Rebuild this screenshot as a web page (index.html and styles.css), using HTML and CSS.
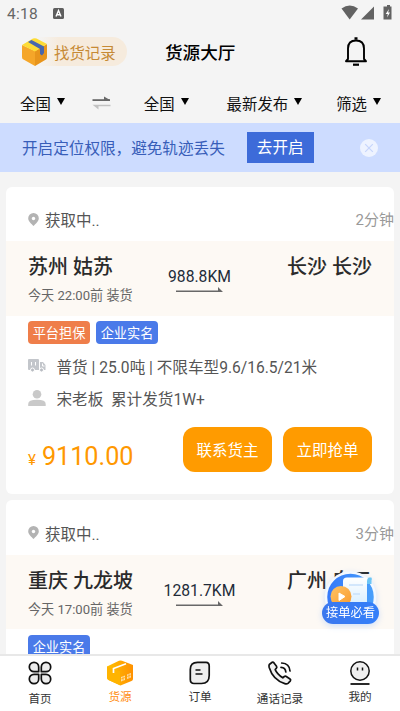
FILE: index.html
```html
<!DOCTYPE html>
<html lang="zh-CN">
<head>
<meta charset="utf-8">
<title>货源大厅</title>
<link rel="stylesheet" href="styles.css">
</head>
<body>
<div class="app">
  <div class="status">
    <span class="clock">4:18</span>
    <svg class="status-a" width="11" height="11" viewBox="0 0 11 11"><rect width="11" height="11" rx="1.500" fill="#5e5e5e"/><path d="M3 8.500L5.500 2.500L8 8.500M3.900 6.700H7.100" fill="none" stroke="#fff" stroke-width="1.400"/></svg>
    <svg class="status-icons" width="52" height="16" viewBox="0 0 52 16" fill="#626262"><path d="M.5 3.500Q8.700-2.500 17 3.500L8.700 14.500Z"/><path d="M33 1.500V14.500H20Z"/><path d="M44.500 1.500H46V0H49V1.500H50.500V14.500H42.500V1.500Z"/><path d="M48 4L44.700 9H46.800L46 12.500L49 7.500H47.100Z" fill="#fff"/></svg>
  </div>
  <header class="header">
    <div class="record">
      <svg class="box" width="26" height="28" viewBox="0 0 26 28"><path d="M0 7L13 13V28L1.500 21.500Q0 21 0 19Z" fill="#f5a629"/><path d="M25 6L13 13V28L24 21.500Q25 21 25 19Z" fill="#e8951c"/><path d="M0 7L11 .6Q13-.2 14.500.6L25 6L13 13.500Z" fill="#fddc36"/><path d="M6 4L9.500 2L22 8.500V15L20 17.500L18 16V11Z" fill="#4867ad"/></svg>
      <span>找货记录</span>
    </div>
    <h1>货源大厅</h1>
    <svg class="bell" width="24" height="30" viewBox="0 0 24 30" fill="none" stroke="#000"><path d="M4 22V11.500Q4 3.500 12 3.500T20 11.500V22L22 24.200H2Z" stroke-width="1.900" stroke-linejoin="round"/><path d="M10.500 1.500H13.500" stroke-width="2.500"/><path d="M9 27.700H15" stroke-width="2.200"/></svg>
  </header>
  <div class="filters">
    <div class="filter from">全国<i></i></div>
    <svg class="swap" width="19" height="14" viewBox="0 0 19 14"><path d="M.5 4H18L12 .5V4Z" fill="#686868"/><path d="M.5 3.200H18V5H.5Z" fill="#686868"/><path d="M.5 8.700H18.500V10.300H6.500V13.500Z" fill="#c2c2c2"/></svg>
    <div class="filter to">全国<i></i></div>
    <div class="filter sort">最新发布<i></i></div>
    <div class="filter pick">筛选<i></i></div>
  </div>
  <div class="notice">
    <span class="notice-text">开启定位权限，避免轨迹丢失</span>
    <span class="enable">去开启</span>
    <svg class="close" width="18" height="18" viewBox="0 0 18 18"><circle cx="9" cy="9" r="9" fill="#eef3ff"/><path d="M5.200 5.200L12.800 12.800M12.800 5.200L5.200 12.800" stroke="#c6d5fb" stroke-width="1.200"/></svg>
  </div>
  <main class="list">
    <article class="card">
      <div class="card-head">
        <svg class="pin" width="11" height="13" viewBox="0 0 11 13"><path d="M5.500 0A5.300 5.300 0 0 1 10.800 5.300C10.800 8.500 7.500 11 5.500 13C3.500 11 .2 8.500.2 5.300A5.300 5.300 0 0 1 5.500 0Z" fill="#b3b3b3"/><circle cx="5.500" cy="5.500" r="1.700" fill="#fff"/></svg>
        <span>获取中..</span><span class="ago">2分钟</span>
      </div>
      <div class="route">
        <div class="start"><strong>苏州 姑苏</strong><small>今天 22:00前 装货</small></div>
        <div class="distance"><span>988.8KM</span><svg width="47" height="6" viewBox="0 0 47 6"><path d="M0 3.500H42V0L47 5H0Z" fill="#686868"/></svg></div>
        <strong class="end">长沙 长沙</strong>
      </div>
      <div class="tags"><span class="tag orange">平台担保</span><span class="tag">企业实名</span></div>
      <div class="info cargo">
        <svg width="18" height="14" viewBox="0 0 18 14"><path d="M1 0H10Q11 0 11 1V11H1Q0 11 0 10V1Q0 0 1 0ZM12 3H15L17.500 6V11H12Z" fill="#c3c6cb"/><path d="M3.500 3V6.500M7.500 3V6.500M14.500 4.500V7H16.500" fill="none" stroke="#fff" stroke-width="1"/><circle cx="4.500" cy="11" r="2" fill="#b9bdc3" stroke="#fff"/><circle cx="13.500" cy="11" r="2" fill="#b9bdc3" stroke="#fff"/></svg>
        <span>普货 | 25.0吨 | 不限车型9.6/16.5/21米</span>
      </div>
      <div class="info owner">
        <svg width="18" height="16" viewBox="0 0 18 16" fill="#c9c9c9"><circle cx="9" cy="4.300" r="4.300"/><path d="M.2 16V14Q.2 9.800 9 9.800T17.700 14V16Z"/></svg>
        <span>宋老板&nbsp; 累计发货1W+</span>
      </div>
      <div class="actions">
        <div class="price"><small>¥</small>9110.00</div>
        <span class="button">联系货主</span><span class="button">立即抢单</span>
      </div>
    </article>
    <article class="card">
      <div class="card-head">
        <svg class="pin" width="11" height="13" viewBox="0 0 11 13"><path d="M5.500 0A5.300 5.300 0 0 1 10.800 5.300C10.800 8.500 7.500 11 5.500 13C3.500 11 .2 8.500.2 5.300A5.300 5.300 0 0 1 5.500 0Z" fill="#b3b3b3"/><circle cx="5.500" cy="5.500" r="1.700" fill="#fff"/></svg>
        <span>获取中..</span><span class="ago">3分钟</span>
      </div>
      <div class="route">
        <div class="start"><strong>重庆 九龙坡</strong><small>今天 17:00前 装货</small></div>
        <div class="distance"><span>1281.7KM</span><svg width="47" height="6" viewBox="0 0 47 6"><path d="M0 3.500H42V0L47 5H0Z" fill="#686868"/></svg></div>
        <strong class="end">广州 白云</strong>
      </div>
      <div class="tags"><span class="tag">企业实名</span></div>
    </article>
  </main>
  <div class="guide">
    <svg width="52" height="38" viewBox="0 0 52 38">
      <defs>
        <linearGradient id="disc" x1="0" y1="0" x2="1" y2="0"><stop offset="0" stop-color="#3478fa"/><stop offset="1" stop-color="#49a0fb"/></linearGradient>
        <linearGradient id="paper" x1="0" y1="0" x2="0" y2="1"><stop offset="0" stop-color="#fff"/><stop offset="1" stop-color="#d9efff"/></linearGradient>
        <linearGradient id="play" x1="0" y1="0" x2="1" y2="1"><stop offset="0" stop-color="#ffc466"/><stop offset="1" stop-color="#f99a2d"/></linearGradient>
      </defs>
      <circle cx="25.500" cy="26" r="24.500" fill="url(#disc)" stroke="#f3f8ff" stroke-width="2.500"/>
      <path d="M41 9Q41 6.500 43 6.500H46.500V13H41Z" fill="#6cc5f5"/>
      <path d="M18 10Q18 6.500 22 6.500H44Q42 7 42 10V33H18Z" fill="url(#paper)"/>
      <path d="M24 14H38M28 23H35" stroke="#c8e1fb" stroke-width="1.500"/>
      <circle cx="16" cy="25.500" r="10.500" fill="url(#play)"/><path d="M14 22L20 25.500L14 29.500Z" fill="#fff" stroke="#fff" stroke-linejoin="round"/>
    </svg>
    <span>接单必看</span>
  </div>
  <nav class="nav">
    <div class="nav-item low">
      <svg width="24" height="24" viewBox="0 0 24 24" fill="#ededed" stroke="#111" stroke-width="1.700"><path d="M10.700 10.700H6A4.700 4.700 0 1 1 10.700 6ZM13.300 10.700V6A4.700 4.700 0 1 1 18 10.700ZM10.700 13.300V18A4.700 4.700 0 1 1 6 13.300ZM13.300 13.300H18A4.700 4.700 0 1 1 13.300 18Z" stroke-linejoin="round"/></svg>
      <span>首页</span>
    </div>
    <div class="nav-item active">
      <svg width="28" height="26" viewBox="0 0 28 26"><defs><linearGradient id="parcel"><stop offset="0" stop-color="#ffc000"/><stop offset="1" stop-color="#ff9100"/></linearGradient></defs><path d="M1 6.500L13 .8Q14.500.2 16 .8L27 5V19Q27 20.500 25.500 21L14.500 25.500L2.500 20Q1 19.300 1 17.500Z" fill="url(#parcel)"/><path d="M1 6.500L14 11V25.300L2.500 20Q1 19.300 1 17.500Z" fill="#ffb400"/><path d="M7.500 13V8.500L20 3.800" fill="none" stroke="#fff" stroke-width="1.700"/><path d="M15 17L19 15.500V20L15 21.500ZM21 14.500L25 13V17.500L21 19Z" fill="#fff" opacity=".65"/><path d="M15 19L19 17.500M21 16.500L25 15M17 16.500V20.500M23 14V18" stroke="#ffa000" stroke-width=".7"/></svg>
      <span>货源</span>
    </div>
    <div class="nav-item order">
      <svg width="24" height="24" viewBox="0 0 24 24"><path d="M9.500 1.300H18Q21.200 1.300 21.200 5V14.500Q21.200 22.500 13.500 22.500H6Q2.300 22.500 2.300 18.500V8.500Q2.300 1.300 9.500 1.300Z" fill="#eee" stroke="#111" stroke-width="1.700"/><path d="M7.500 9H12.500M7.500 13H14.500" stroke="#111" stroke-width="1.600"/></svg>
      <span>订单</span>
    </div>
    <div class="nav-item low">
      <svg width="24" height="24" viewBox="0 0 24 24" fill="none" stroke="#111" stroke-width="1.700" stroke-linecap="round" stroke-linejoin="round"><path d="M1.300 3.500L4.200 1.300Q5.100.8 6 1.900L8.500 5.200Q9.200 6.400 8.300 7.300L7.200 8.600Q9 13 14.800 16.800L16.300 15.500Q17.300 14.800 18.300 15.500L22 18Q23.100 18.900 22.400 19.800L20 22.300Q18.800 23.300 16.800 22.600Q5 19 1.200 6.500Q.7 4.700 1.300 3.500Z" fill="#f2f2f2"/><path d="M13 6.300Q17.500 6.500 17.800 11M13.700 2Q21.500 2.400 22 10"/></svg>
      <span>通话记录</span>
    </div>
    <div class="nav-item mine">
      <svg width="24" height="24" viewBox="0 0 24 24"><circle cx="12" cy="10" r="9.200" fill="#eee" stroke="#111" stroke-width="1.500"/><path d="M9.500 6.500V9.500M14.500 6.500V9.500" stroke="#111" stroke-width="1.500"/><path d="M2.500 23H21.500" stroke="#111" stroke-width="1.800"/></svg>
      <span>我的</span>
    </div>
  </nav>
</div>
</body>
</html>
```
FILE: styles.css
```css
* { box-sizing: border-box; }
body {
  margin: 0;
  font-family: Roboto, "Noto Sans CJK SC", sans-serif;
  color: #222;
}
svg { display: block; flex: none; overflow: visible; }
.app {
  position: relative;
  display: flex;
  flex-direction: column;
  width: 400px;
  height: 711px;
  overflow: hidden;
  background: #f4f4f4;
  white-space: nowrap;
}
.status {
  display: flex;
  align-items: center;
  height: 28px;
  padding: 0 7px;
  color: #666;
}
.clock { width: 46px; font-size: 15.500px; letter-spacing: .3px; }
.status-a { margin-top: -1px; }
.status-icons { margin: -2px 0 0 auto; }
.header {
  display: grid;
  grid-template-columns: 105px 1fr 24px;
  align-items: center;
  height: 48px;
  padding: 0 32px 0 22px;
}
.record {
  display: flex;
  align-items: center;
  gap: 6px;
  height: 29px;
  margin-top: -1px;
  border-radius: 5px 15px 15px 5px;
  background: linear-gradient(90deg, transparent 15%, #f6ebdd 35%);
  color: #c68a35;
  font-size: 15.400px;
}
h1 {
  margin: -2px 0 0 38px;
  color: #000;
  font-size: 17.600px;
  font-weight: 500;
}
.filters {
  display: flex;
  align-items: center;
  height: 47px;
  padding: 6px 19px 0 20px;
  color: #111;
  font-size: 15.400px;
}
.filter { display: flex; align-items: center; }
.filter i {
  margin: -2px 0 0 6px;
  border: 4px solid transparent;
  border-top: 7px solid #000;
  border-bottom: 0;
}
.from { margin-right: 27px; }
.to { margin: 0 38px 0 33px; }
.pick { margin-left: auto; }
.notice {
  display: flex;
  align-items: center;
  height: 49px;
  padding: 0 22px;
  background: #cddcff;
  color: #385eb9;
  font-size: 15.600px;
}
.notice-text { margin-top: -2px; }
.enable {
  width: 67px;
  height: 31px;
  margin-left: 22px;
  padding-top: 1px;
  background: #3d6bd9;
  color: #fff;
  line-height: 31px;
  text-align: center;
}
.close { margin-left: auto; }
.list {
  display: flex;
  flex: 1;
  flex-direction: column;
  gap: 6px;
  min-height: 0;
  padding: 14.500px 6px 0;
  overflow: hidden;
}
.card {
  flex: none;
  height: 307.500px;
  border-radius: 6px;
  background: #fff;
  overflow: hidden;
}
.card-head {
  display: flex;
  align-items: center;
  height: 54.500px;
  padding: 11px 0 0 22px;
  color: #555;
  font-size: 15.500px;
}
.pin { margin: 0 6px 0 0; }
.ago { margin: -1px 0 0 auto; color: #999; font-size: 15px; }
.route {
  position: relative;
  display: flex;
  justify-content: space-between;
  height: 74.500px;
  padding: 14px 22px 0;
  background: #fdf9f4;
}
.route strong {
  display: block;
  color: #2b2b2b;
  font-size: 20px;
  font-weight: 500;
  line-height: 25px;
}
.start small {
  display: block;
  margin-top: 6px;
  color: #666;
  font-size: 13.100px;
  line-height: 20px;
}
.distance {
  position: absolute;
  top: 26px;
  left: 113px;
  display: flex;
  flex-direction: column;
  align-items: center;
  width: 161px;
  color: #222b38;
  font-size: 15.700px;
  line-height: 20px;
}
.distance svg { margin-top: 0; }
.tags { display: flex; gap: 6px; padding: 5.500px 22px 0; }
.tag {
  width: 62px;
  height: 23px;
  padding-top: 1px;
  border-radius: 4px;
  background: #4a7ae9;
  color: #fff;
  font-size: 13.200px;
  line-height: 23px;
  text-align: center;
}
.orange { background: #ef7e4a; }
.info {
  display: flex;
  align-items: center;
  gap: 10.500px;
  height: 32px;
  padding-left: 22px;
  color: #555;
  font-size: 15.600px;
}
.cargo { margin-top: 5.500px; }
.actions { display: flex; gap: 11px; padding: 13px 22px 0; }
.button {
  width: 89px;
  height: 45px;
  padding-top: 2px;
  border-radius: 12px;
  background: #ff9b00;
  color: #fff;
  font-size: 15.500px;
  line-height: 45px;
  text-align: center;
}
.price {
  margin: 15px auto 0 0;
  color: #ff9800;
  font-size: 25.200px;
  line-height: 30px;
}
.price small { margin-right: 6px; font-size: 15px; }
.guide {
  position: absolute;
  top: 571px;
  left: 321px;
  display: flex;
  flex-direction: column;
  align-items: center;
  width: 59px;
  filter: drop-shadow(0 2px 3px #8bb8ff66);
}
.guide span {
  width: 57px;
  height: 22px;
  margin-top: -7px;
  border-radius: 11px;
  background: linear-gradient(90deg, #3c78ee, #347ff9);
  color: #fff;
  font-size: 12.300px;
  line-height: 23px;
  text-align: center;
}
.nav {
  position: relative;
  display: grid;
  grid-template-columns: repeat(5, 1fr);
  height: 57px;
  border-top: 2px solid #e8e8e8;
  background: #fff;
}
.nav-item {
  display: flex;
  flex-direction: column;
  align-items: center;
  padding-top: 5px;
  color: #333;
  font-size: 11.600px;
  line-height: 16px;
}
.nav-item span { margin-top: 4px; }
.nav-item.low span { margin-top: 6px; }
.nav-item.active { padding-top: 4px; color: #ff8e16; }
.nav-item.active span { margin-top: 3px; }
```
